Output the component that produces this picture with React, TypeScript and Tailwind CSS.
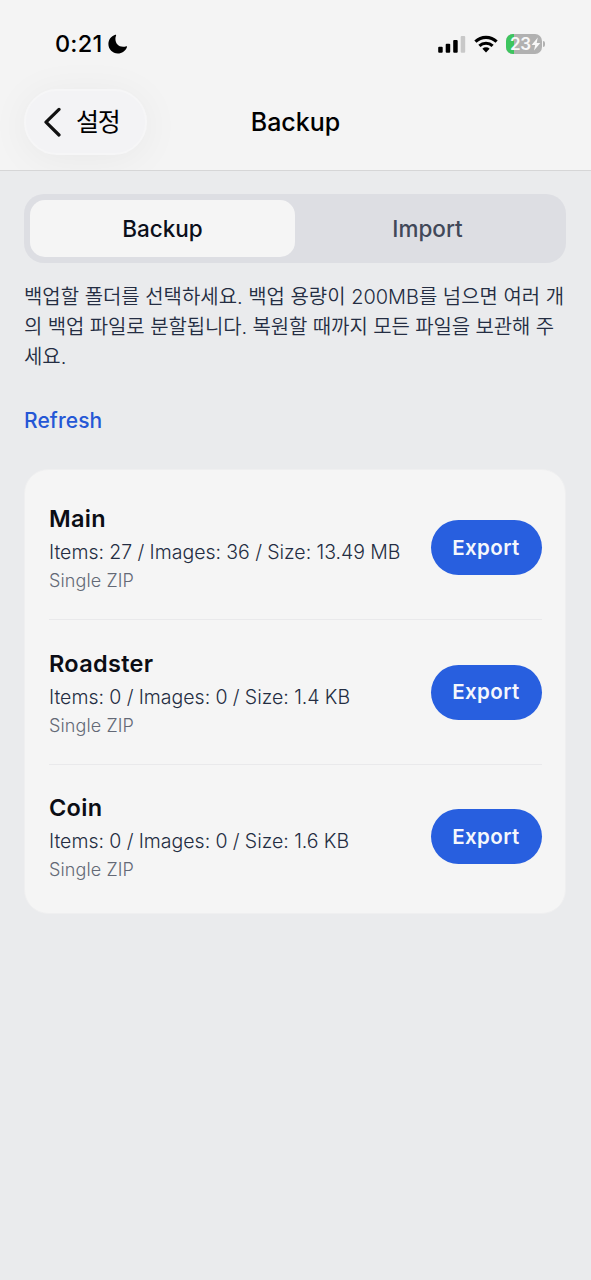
import { useState } from "react";

type Folder = {
  id: number;
  name: string;
  items: number;
  images: number;
  size: string;
};

const folders: Folder[] = [
  { id: 1, name: "Main", items: 27, images: 36, size: "13.49 MB" },
  { id: 2, name: "Roadster", items: 0, images: 0, size: "1.4 KB" },
  { id: 3, name: "Coin", items: 0, images: 0, size: "1.6 KB" },
];

const tabs = ["Backup", "Import"];

const StatusBar = () => {
  return (
    <div className="flex h-[88px] items-center justify-between pl-[55px] pr-[46px]">
      <div className="flex items-center gap-[6px]">
        <span className="text-[23.5px] leading-none font-[550] tracking-[0.2px] text-black">0:21</span>
        <svg width="20" height="20" viewBox="0 0 20 20">
          <path
            d="M7.2 0.8C3 2.2 0.4 5.8 0.4 10c0 5.200 4.200 9.400 9.400 9.400 4.200 0 7.700-2.600 9.200-6.500 0.200-0.600-0.200-0.900-0.700-0.700-1 0.400-2 0.600-3.200 0.600-4.600 0-7.700-3.200-7.700-7.700 0-1.300 0.200-2.500 0.700-3.500 0.200-0.600-0.300-1-0.900-0.800z"
            fill="#000"
          />
        </svg>
      </div>
      <div className="flex items-center">
        <svg width="28" height="18" viewBox="0 0 28 18">
          <rect x="0.200" y="11.800" width="4.500" height="6" rx="1" fill="#000" />
          <rect x="7.700" y="8.700" width="4.500" height="9.100" rx="1" fill="#000" />
          <rect x="15.200" y="5" width="4.500" height="12.800" rx="1" fill="#000" />
          <rect x="22.700" y="1" width="4.500" height="16.800" rx="1" fill="#c8c8c8" />
        </svg>
        <svg className="ml-[8px]" width="24" height="18" viewBox="0 0 24 18">
          <g fill="none" stroke="#000" strokeWidth="3.100">
            <path d="M1.400 6.700a15.200 15.200 0 0 1 21.200 0" />
            <path d="M5.400 10.900a9.500 9.500 0 0 1 13.200 0" />
          </g>
          <path d="M8.400 13.700a5.200 5.200 0 0 1 7.200 0L12 17.500z" fill="#000" />
        </svg>
        <div className="relative ml-[8px] flex h-[20px] w-[36px] items-center overflow-hidden rounded-[7px] bg-[#b1b1b1] pl-[4px]">
          <div className="absolute inset-y-0 left-0 w-[8px] bg-[#3dc55e]" />
          <span className="relative text-[17px] leading-none font-semibold tracking-[-0.4px] text-[#f8f8f8]">
            23
          </span>
          <svg className="relative" width="10" height="14" viewBox="0 0 10 14">
            <path d="M6.800 0.500L0.600 7.900h3.600L3 13.500l6.300-7.600H5.700z" fill="#f8f8f8" />
          </svg>
        </div>
        <div className="ml-[1px] h-[6px] w-[2px] rounded-r-full bg-[#b1b1b1]" />
      </div>
    </div>
  );
};

const App = () => {
  const [tab, setTab] = useState("Backup");

  return (
    <div className="h-[1280px] w-[591px] overflow-hidden bg-[#eaebed] font-['Inter','Noto_Sans_CJK_KR',sans-serif]">
      <header className="h-[171px] overflow-hidden border-b-[1.5px] border-[#d6d6d7] bg-[#f4f4f4]">
        <StatusBar />
        <div className="grid grid-cols-[123px_1fr_123px] items-center px-6 pt-px">
          <button className="flex h-[66px] items-center rounded-full border-2 border-[#f6f6f7] bg-[#f3f3f5] pl-[17px] shadow-[0_4px_40px_rgba(0,0,0,0.05)]">
            <svg width="19" height="30" viewBox="0 0 19 30">
              <path
                d="M16 2.400L3 15.200l13 12.800"
                fill="none"
                stroke="#111"
                strokeWidth="3.200"
                strokeLinecap="round"
                strokeLinejoin="round"
              />
            </svg>
            <span className="ml-[14px] pt-px text-[25px] leading-none tracking-[-1.2px] text-black">
              설정
            </span>
          </button>
          <h1 className="text-center text-[25px] leading-none font-[550] text-black">
            Backup
          </h1>
        </div>
      </header>

      <main className="pt-[23px] pr-[25px] pl-6">
        <div className="grid h-[69px] grid-cols-2 rounded-[20px] bg-[#dddee3] p-[6px]">
          {tabs.map((t) => (
            <button
              key={t}
              className={
                tab === t
                  ? "rounded-[15px] bg-[#f5f5f5] text-[22.500px] font-medium text-[#0b0f1a]"
                  : "rounded-[15px] text-[22.500px] font-medium text-[#414859]"
              }
              onClick={() => setTab(t)}
            >
              {t}
            </button>
          ))}
        </div>

        <p className="mt-[19px] text-[19.950px] leading-[30px] font-[350] whitespace-nowrap text-[#242d42]">
          <span className="block">백업할 폴더를 선택하세요. 백업 용량이 200MB를 넘으면 여러 개</span>
          <span className="block tracking-[-0.08px]">의 백업 파일로 분할됩니다. 복원할 때까지 모든 파일을 보관해 주</span>
          <span className="block">세요.</span>
        </p>

        <button className="mt-[33px] block text-[21px] leading-[32px] font-medium tracking-[0.1px] text-[#2557d6]">
          Refresh
        </button>

        <section className="mt-[32px] rounded-[24px] border border-[#efeff0] bg-[#f5f5f5] pt-[5px] pr-[23.5px] pb-[4px] pl-[24px]">
          {folders.map((folder) => (
            <div
              key={folder.id}
              className="flex h-[144.75px] items-center justify-between border-b border-[#e9e9eb] pt-[2px] last:border-transparent"
            >
              <div className="whitespace-nowrap">
                <h2 className="text-[23.500px] leading-[32px] font-semibold tracking-[0.3px] text-[#0b0d14]">
                  {folder.name}
                </h2>
                <p className="text-[19.500px] leading-[34px] font-light [word-spacing:-0.2px] text-[#242d42]">
                  Items: {folder.items} / Images: {folder.images} / Size: {folder.size}
                </p>
                <p className="text-[18px] leading-[24px] font-light tracking-[0.1px] text-[#636976]">
                  Single ZIP
                </p>
              </div>
              <button className="mb-[1px] h-[55px] w-[111px] rounded-full bg-[#285fdf] pt-px text-[20.500px] font-semibold tracking-[0.4px] text-[#f5f7fc]">
                Export
              </button>
            </div>
          ))}
        </section>
      </main>
    </div>
  );
};

export default App;
